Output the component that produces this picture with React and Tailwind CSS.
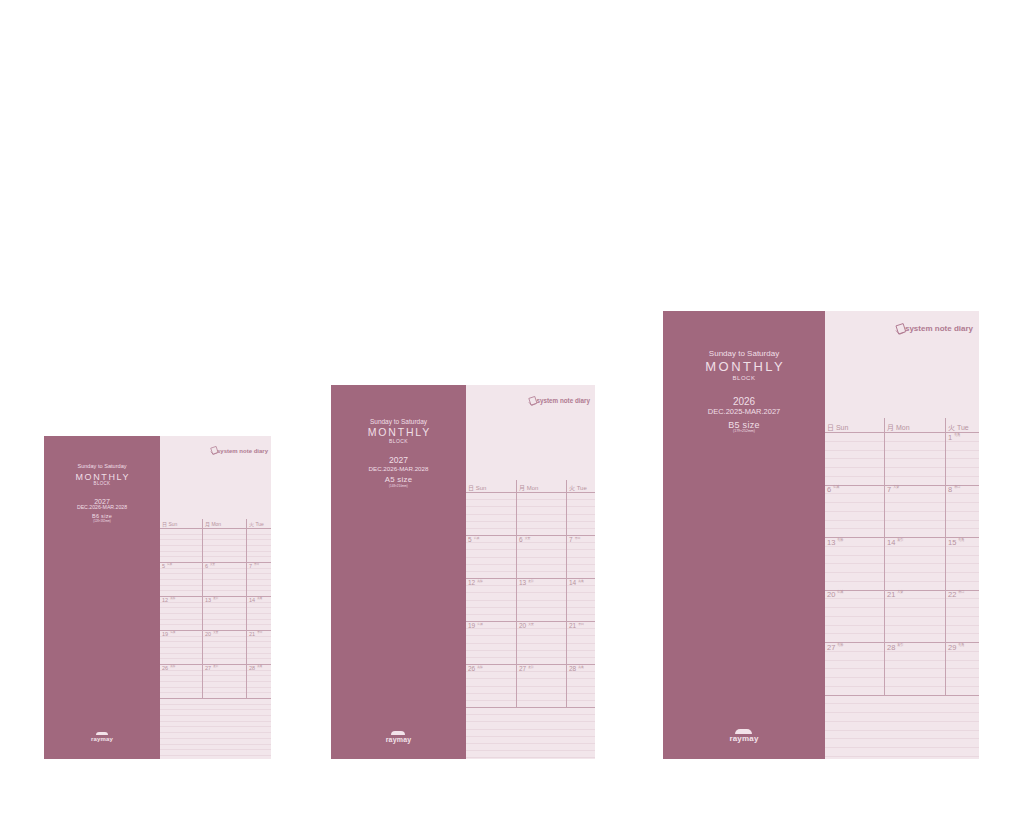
import React from "react";

const small = {
  wrap: "ml-[44px] h-[323px]",
  cover: "w-[116px] pt-[28px]",
  page: "w-[111px]",
  t1: "text-[5.6px]",
  t2: "mt-[3px] text-[9px] tracking-[1.6px] pl-[1.6px]",
  t3: "mt-0 text-[4.5px] tracking-[0.3px]",
  t4: "mt-[12px] text-[7px]",
  t5: "mt-0 text-[5.2px]",
  t6: "mt-[3.5px] text-[5.5px]",
  t7: "mt-[1px] text-[2.8px]",
  rmWrap: "mb-[17px]",
  dome: "w-[12px] h-[3.5px] mb-[1px]",
  rm: "text-[6px]",
  top: "h-[83px] pt-[10px] pr-[3px]",
  icon: "w-[9px] h-[9px]",
  logoText: "text-[6px]",
  head: "h-[10px]",
  headText: "text-[5px] pb-[1px]",
  cols: ["w-[43px]", "w-[44px]", "flex-1"],
  row: "h-[34px]",
  num: "text-[5.5px]",
  rok: "text-[2.5px]",
  seg: "h-[5.7px]",
  year: "2027",
  range: "DEC.2026-MAR.2028",
  size: "B6 size",
  mm: "(128×182mm)",
  days: [[null, null, null], ["5", "6", "7"], ["12", "13", "14"], ["19", "20", "21"], ["26", "27", "28"]],
};

const medium = {
  wrap: "ml-[60px] h-[374px]",
  cover: "w-[135px] pt-[34px]",
  page: "w-[129px]",
  t1: "text-[6.5px]",
  t2: "mt-[1px] text-[10.5px] tracking-[1.8px] pl-[1.8px]",
  t3: "mt-[1.5px] text-[5px] tracking-[0.4px]",
  t4: "mt-[12px] text-[8.5px]",
  t5: "mt-[2px] text-[6.2px]",
  t6: "mt-[4px] text-[7.8px]",
  t7: "mt-[1px] text-[3px]",
  rmWrap: "mb-[16.5px]",
  dome: "w-[14px] h-[4px] mb-[1px]",
  rm: "text-[7px]",
  top: "h-[95px] pt-[11px] pr-[5px]",
  icon: "w-[10px] h-[10px]",
  logoText: "text-[6.3px]",
  head: "h-[13px]",
  headText: "text-[6px] pb-[1.5px]",
  cols: ["w-[51px]", "w-[50px]", "flex-1"],
  row: "h-[43px]",
  num: "text-[6.5px]",
  rok: "text-[2.8px]",
  seg: "h-[7.2px]",
  year: "2027",
  range: "DEC.2026-MAR.2028",
  size: "A5 size",
  mm: "(148×210mm)",
  days: [[null, null, null], ["5", "6", "7"], ["12", "13", "14"], ["19", "20", "21"], ["26", "27", "28"]],
};

const large = {
  wrap: "ml-[68px] h-[448px]",
  cover: "w-[162px] pt-[39px]",
  page: "w-[154px]",
  t1: "text-[8px]",
  t2: "mt-[2px] text-[13px] tracking-[2.5px] pl-[2.5px]",
  t3: "mt-[2px] text-[6px] tracking-[0.5px]",
  t4: "mt-[16px] text-[10px]",
  t5: "mt-[1px] text-[7.5px]",
  t6: "mt-[5px] text-[9px]",
  t7: "mt-0 text-[3.5px]",
  rmWrap: "mb-[16.5px]",
  dome: "w-[17px] h-[4.5px] mb-[1px]",
  rm: "text-[8px]",
  top: "h-[107px] pt-[12px] pr-[6px]",
  icon: "w-[12px] h-[12px]",
  logoText: "text-[8px]",
  head: "h-[15px]",
  headText: "text-[7px] pb-[1.5px]",
  cols: ["w-[60px]", "w-[61px]", "flex-1"],
  row: "h-[52.5px]",
  num: "text-[7.5px]",
  rok: "text-[3px]",
  seg: "h-[8.75px]",
  year: "2026",
  range: "DEC.2025-MAR.2027",
  size: "B5 size",
  mm: "(179×252mm)",
  days: [[null, null, "1"], ["6", "7", "8"], ["13", "14", "15"], ["20", "21", "22"], ["27", "28", "29"]],
};

const rokuyo = ["先勝", "友引", "先負", "仏滅", "大安", "赤口"];
const labels = ["日 Sun", "月 Mon", "火 Tue"];

function Cover({ s }) {
  return (
    <div className={`flex flex-col items-center bg-[#a1687e] text-[#f0dfe6] ${s.cover}`}>
      <div className={`leading-none whitespace-nowrap ${s.t1}`}>Sunday to Saturday</div>
      <div className={`leading-none whitespace-nowrap ${s.t2}`}>MONTHLY</div>
      <div className={`leading-none whitespace-nowrap ${s.t3}`}>BLOCK</div>
      <div className={`leading-none whitespace-nowrap ${s.t4}`}>{s.year}</div>
      <div className={`leading-none whitespace-nowrap ${s.t5}`}>{s.range}</div>
      <div className={`leading-none whitespace-nowrap tracking-[0.3px] ${s.t6}`}>{s.size}</div>
      <div className={`leading-none whitespace-nowrap ${s.t7}`}>{s.mm}</div>
      <div className={`mt-auto flex flex-col items-center ${s.rmWrap}`}>
        <div className={`rounded-t-full bg-[#f3e3ea] ${s.dome}`} />
        <div className={`font-bold leading-none tracking-[0.2px] text-[#f3e3ea] ${s.rm}`}>raymay</div>
      </div>
    </div>
  );
}

function Logo({ s }) {
  return (
    <div className="flex items-center">
      <svg className={s.icon} viewBox="0 0 12 12" fill="none" stroke="#b07a91" strokeWidth="0.9">
        <rect x="2.2" y="1.5" width="7.5" height="8.5" transform="rotate(-18 6 6)" />
        <path d="M1 7.5 L4.5 11.2 L9.5 9.2" />
      </svg>
      <span className={`-ml-[2px] font-bold leading-none whitespace-nowrap text-[#b07a91] ${s.logoText}`}>
        system note diary
      </span>
    </div>
  );
}

function Page({ s }) {
  const below = Array.from({ length: 14 });
  return (
    <div className={`flex flex-col bg-[#f2e6eb] ${s.page}`}>
      <div className={`flex shrink-0 justify-end items-start ${s.top}`}>
        <Logo s={s} />
      </div>
      <div className={`flex shrink-0 border-b border-[#c6a3b1] ${s.head}`}>
        {labels.map((l, i) => (
          <div
            key={l}
            className={`flex items-end pl-[2px] ${s.cols[i]} ${i < 2 ? "border-r border-[#c6a3b1]" : ""}`}
          >
            <span className={`leading-none whitespace-nowrap text-[#b8949f] ${s.headText}`}>{l}</span>
          </div>
        ))}
      </div>
      {s.days.map((row, r) => (
        <div key={r} className={`flex shrink-0 ${s.row}`}>
          {row.map((d, c) => (
            <div
              key={c}
              className={`flex flex-col ${s.cols[c]} ${c < 2 ? "border-r border-[#c6a3b1]" : ""}`}
            >
              {[0, 1, 2, 3, 4, 5].map((k) => (
                <div
                  key={k}
                  className={`flex-1 min-h-0 border-b ${k === 5 ? "border-[#c6a3b1]" : "border-[#e9d8df]"}`}
                >
                  {k === 0 && d ? (
                    <div className={`pl-[2px] pt-[0.5px] leading-none whitespace-nowrap text-[#b8949f] ${s.num}`}>
                      {d}
                      <span className={`ml-[2px] align-top ${s.rok}`}>{rokuyo[(r * 3 + c) % 6]}</span>
                    </div>
                  ) : null}
                </div>
              ))}
            </div>
          ))}
        </div>
      ))}
      <div className="flex flex-1 flex-col overflow-hidden">
        {below.map((_, i) => (
          <div key={i} className={`shrink-0 border-b border-[#e9d8df] ${s.seg}`} />
        ))}
      </div>
    </div>
  );
}

function Diary({ s }) {
  return (
    <div className={`flex shrink-0 ${s.wrap}`}>
      <Cover s={s} />
      <Page s={s} />
    </div>
  );
}

export default function App() {
  return (
    <div
      className="flex h-[822px] w-[1024px] items-end bg-white pb-[63px]"
      style={{ fontFamily: '"Liberation Sans", "Noto Sans CJK JP", Arial, sans-serif' }}
    >
      <Diary s={small} />
      <Diary s={medium} />
      <Diary s={large} />
    </div>
  );
}
